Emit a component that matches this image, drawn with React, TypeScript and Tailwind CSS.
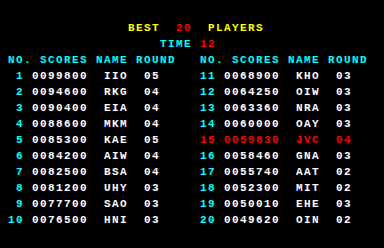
import React from 'react';

type Entry = { no: number; score: string; name: string; round: string };

const entries: Entry[] = [
  { no: 1, score: '0099800', name: 'IIO', round: '05' },
  { no: 2, score: '0094600', name: 'RKG', round: '04' },
  { no: 3, score: '0090400', name: 'EIA', round: '04' },
  { no: 4, score: '0088600', name: 'MKM', round: '04' },
  { no: 5, score: '0085300', name: 'KAE', round: '05' },
  { no: 6, score: '0084200', name: 'AIW', round: '04' },
  { no: 7, score: '0082500', name: 'BSA', round: '04' },
  { no: 8, score: '0081200', name: 'UHY', round: '03' },
  { no: 9, score: '0077700', name: 'SAO', round: '03' },
  { no: 10, score: '0076500', name: 'HNI', round: '03' },
  { no: 11, score: '0068900', name: 'KHO', round: '03' },
  { no: 12, score: '0064250', name: 'OIW', round: '03' },
  { no: 13, score: '0063360', name: 'NRA', round: '03' },
  { no: 14, score: '0060000', name: 'OAY', round: '03' },
  { no: 15, score: '0059830', name: 'JVC', round: '04' },
  { no: 16, score: '0058460', name: 'GNA', round: '03' },
  { no: 17, score: '0055740', name: 'AAT', round: '02' },
  { no: 18, score: '0052300', name: 'MIT', round: '02' },
  { no: 19, score: '0050010', name: 'EHE', round: '03' },
  { no: 20, score: '0049620', name: 'OIN', round: '02' },
];

// the player's own entry is shown in red
const CURRENT = 15;

const Row: React.FC<{ e: Entry }> = ({ e }) => {
  const hit = e.no === CURRENT;
  return (
    <div className="h-[8px] pl-[8px] whitespace-pre">
      <span className={hit ? 'text-[#ff0000]' : 'text-[#00ffff]'}>{String(e.no).padStart(2)} </span>
      <span className={hit ? 'text-[#ff0000]' : 'text-white'}>
        {e.score}  {e.name}  {e.round}
      </span>
    </div>
  );
};

const Column: React.FC<{ list: Entry[] }> = ({ list }) => (
  <div className="flex flex-col gap-[8px]">
    <div className="h-[8px] pl-[8px] whitespace-pre text-[#00ffff]">NO. SCORES NAME ROUND</div>
    {list.map((e) => (
      <Row key={e.no} e={e} />
    ))}
  </div>
);

export default function App() {
  return (
    <div className="w-[384px] h-[248px] bg-black overflow-hidden pt-[24px] font-['Liberation_Mono',monospace] font-bold text-[11px] leading-[8px] tracking-[1.4px]">
      <div className="flex flex-col gap-[8px]">
        <div className="h-[8px] pl-[128px] whitespace-pre">
          <span className="text-[#ffff00]">BEST  </span>
          <span className="text-[#ff0000]">20  </span>
          <span className="text-[#ffff00]">PLAYERS</span>
        </div>
        <div className="h-[8px] pl-[160px] whitespace-pre">
          <span className="text-[#00ffff]">TIME </span>
          <span className="text-[#ff0000]">12</span>
        </div>
        <div className="grid grid-cols-2">
          <Column list={entries.slice(0, 10)} />
          <Column list={entries.slice(10)} />
        </div>
      </div>
    </div>
  );
}
